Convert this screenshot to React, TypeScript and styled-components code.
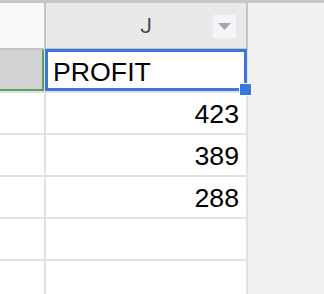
import React from 'react'
import styled, { createGlobalStyle } from 'styled-components'

const GlobalStyle = createGlobalStyle`
  html, body {
    margin: 0;
    padding: 0;
    background: #f1f1f1;
  }
`

const rows = ['PROFIT', '423', '389', '288', '', '']

const Frame = styled.div`
  width: 324px;
  height: 294px;
  overflow: hidden;
  display: flex;
  flex-direction: column;
  background: #f1f1f1;
`

const TopEdge = styled.div`
  height: 3px;
  flex: 0 0 3px;
  background: #c6c6c6;
`

const Grid = styled.div`
  display: grid;
  grid-template-columns: 46px 202px 1fr;
  grid-template-rows: 47px 43px repeat(5, 42px);
`

const HeaderCell = styled.div<{ $selected?: boolean }>`
  position: relative;
  box-sizing: border-box;
  display: flex;
  align-items: center;
  justify-content: center;
  background: ${(p) => (p.$selected ? '#e8e9eb' : '#f8f9fa')};
  border-right: 2px solid #c4c4c4;
  border-bottom: 2px solid #c4c4c4;
  font-family: Roboto, 'Liberation Sans', sans-serif;
  font-size: 21px;
  color: #4a4a4a;
  padding-top: 1px;
`

const MenuButton = styled.div`
  position: absolute;
  right: 10px;
  top: 12px;
  width: 23px;
  height: 23px;
  background: #f4f5f6;
  display: flex;
  align-items: center;
  justify-content: center;
`

const Filler = styled.div`
  background: #f1f1f1;
`

const Cell = styled.div<{ $ghost?: boolean }>`
  position: relative;
  box-sizing: border-box;
  display: flex;
  align-items: flex-end;
  justify-content: flex-end;
  padding: 0 7px 4px 7px;
  background: ${(p) => (p.$ghost ? '#d3d3d3' : '#fff')};
  border-right: 2px solid #e2e2e2;
  border-bottom: 2px solid #e2e2e2;
  box-shadow: ${(p) => (p.$ghost ? 'inset -2px -2px 0 #5ba25f' : 'none')};
  font-family: 'Liberation Sans', Arial, sans-serif;
  font-size: 26.7px;
  line-height: 30px;
  color: #000;
`

const TextCell = styled(Cell)`
  justify-content: flex-start;
  padding-left: 7px;
  z-index: 2;
`

const ActiveBorder = styled.div`
  position: absolute;
  left: -1px;
  top: -1px;
  right: -1px;
  bottom: 0;
  border: 3px solid #3a77dc;
  pointer-events: none;
`

const FillHandle = styled.div`
  position: absolute;
  right: -6px;
  bottom: -5px;
  width: 11px;
  height: 11px;
  background: #3a77dc;
  border: 1px solid #fff;
`

export default function App() {
  return (
    <>
      <GlobalStyle />
      <Frame>
        <TopEdge />
        <Grid>
          <HeaderCell />
          <HeaderCell $selected>
            J
            <MenuButton>
              <svg width="13" height="7" viewBox="0 0 13 7">
                <path d="M0 0 L13 0 L6.5 7 Z" fill="#a3a6aa" />
              </svg>
            </MenuButton>
          </HeaderCell>
          <Filler />
          {rows.map((value, i) => (
            <React.Fragment key={i}>
              <Cell $ghost={i === 0} />
              {i === 0 ? (
                <TextCell>
                  {value}
                  <ActiveBorder />
                  <FillHandle />
                </TextCell>
              ) : (
                <Cell>{value}</Cell>
              )}
              <Filler />
            </React.Fragment>
          ))}
        </Grid>
      </Frame>
    </>
  )
}
